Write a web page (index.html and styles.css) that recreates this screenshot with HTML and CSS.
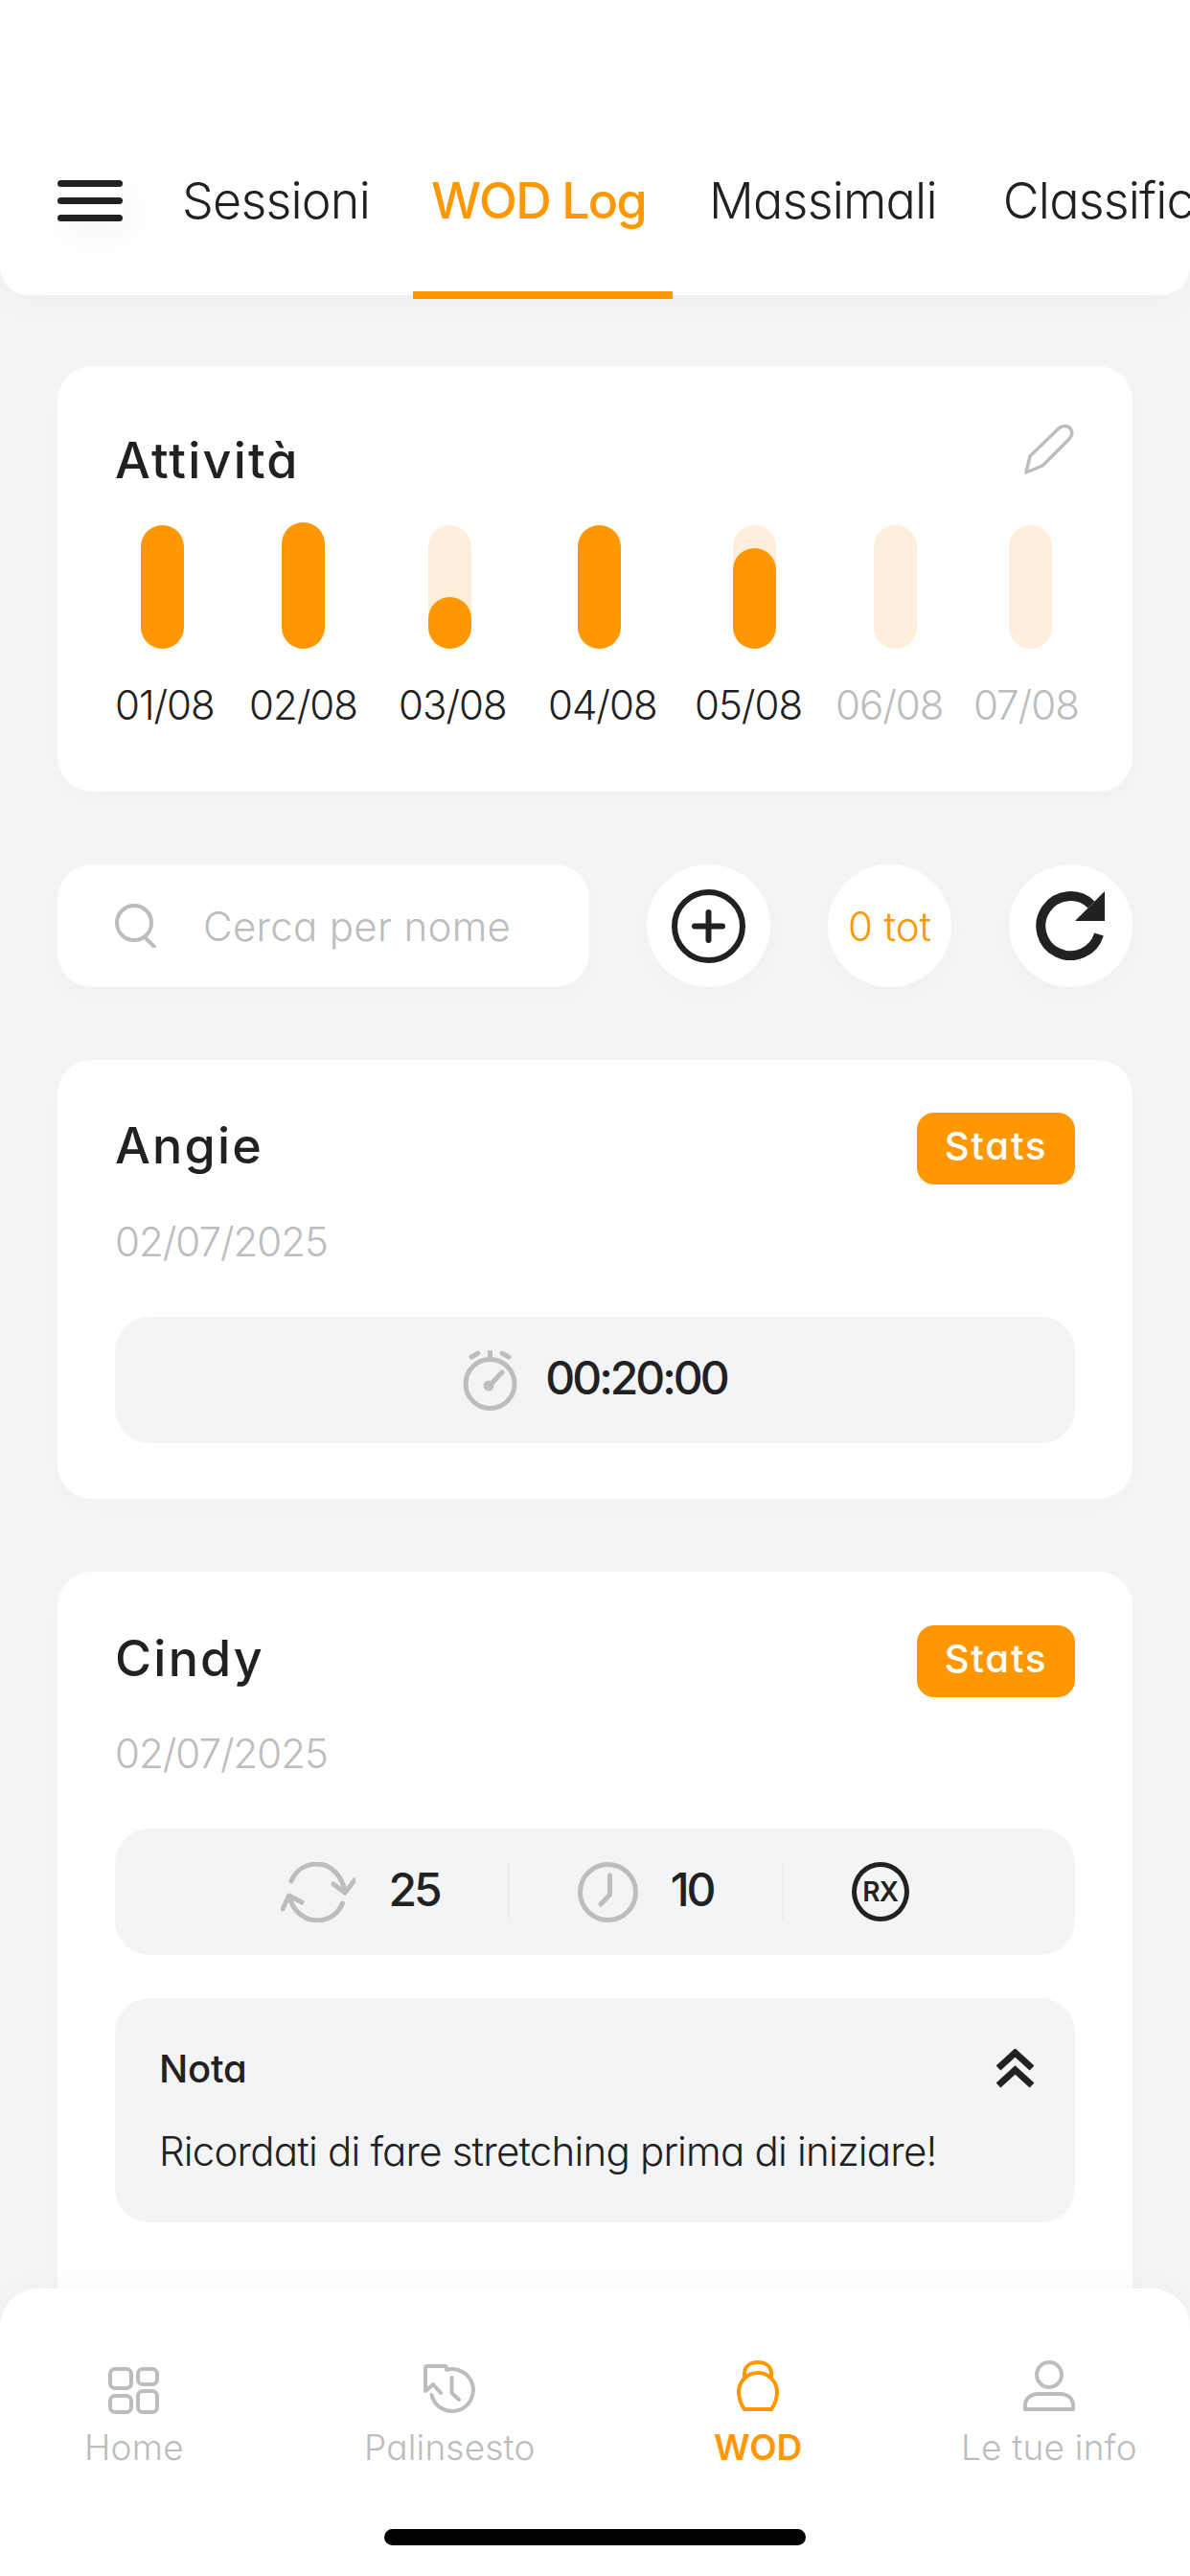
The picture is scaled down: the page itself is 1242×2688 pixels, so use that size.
FILE: index.html
```html
<!DOCTYPE html>
<html lang="it">
<head>
<meta charset="utf-8">
<title>WOD Log</title>
<link rel="stylesheet" href="styles.css">
</head>
<body>
<div class="app">
  <header class="topbar">
    <div class="burger"><span></span><span></span><span></span></div>
    <nav class="tabs">
      <div class="tab">Sessioni</div>
      <div class="tab tab-active">WOD Log</div>
      <div class="tab">Massimali</div>
      <div class="tab">Classifica</div>
    </nav>
  </header>

  <main class="content">
    <section class="card activity">
      <div class="activity-head">
        <h2 class="title">Attività</h2>
        <svg class="pencil" viewBox="0 0 52 52"><path d="M2 50 L6 33 L36 4 Q43 -1 48 4 Q52 9 47 15 L19 43 Z"/></svg>
      </div>
      <div class="bars">
        <div class="track"><div class="fill fill-full"></div></div>
        <div class="track"><div class="fill fill-over"></div></div>
        <div class="track"><div class="fill" style="height:54px"></div></div>
        <div class="track"><div class="fill fill-full"></div></div>
        <div class="track"><div class="fill" style="height:105px"></div></div>
        <div class="track"></div>
        <div class="track"></div>
      </div>
      <div class="days">
        <span>01/08</span><span>02/08</span><span>03/08</span><span>04/08</span><span>05/08</span>
        <span class="day-off">06/08</span><span class="day-off">07/08</span>
      </div>
    </section>

    <section class="tools">
      <div class="search">
        <svg class="search-icon" viewBox="0 0 44 46"><circle cx="21" cy="20" r="18"/><path d="M32 35 L42 45"/></svg>
        <span class="placeholder">Cerca per nome</span>
      </div>
      <div class="round">
        <svg class="plus" viewBox="0 0 77 77"><circle cx="38.5" cy="38.5" r="35.5"/><path d="M24 38.5 H53 M38.5 24 V53"/></svg>
      </div>
      <div class="round total">0 tot</div>
      <div class="round">
        <svg class="redo" viewBox="0 0 73 72"><path class="redo-arc" d="M58 14 A31 31 0 1 0 66 45"/><path class="redo-head" d="M72 0 V31 H41 Z"/></svg>
      </div>
    </section>

    <section class="card wod">
      <div class="wod-head">
        <h2 class="title">Angie</h2>
        <div class="stats">Stats</div>
      </div>
      <div class="date">02/07/2025</div>
      <div class="pill">
        <svg class="stopwatch" viewBox="0 0 57 63"><circle cx="28.5" cy="35" r="25.5"/><path d="M28.5 2 V8 M9 7 L16 3 M48 7 L41 3"/><path d="M27 38 L41 23"/><circle class="pivot" cx="27" cy="37" r="3"/></svg>
        <span class="value">00:20:00</span>
      </div>
    </section>

    <section class="card wod wod-long">
      <div class="wod-head">
        <h2 class="title">Cindy</h2>
        <div class="stats">Stats</div>
      </div>
      <div class="date">02/07/2025</div>
      <div class="pill">
        <div class="cell">
          <svg class="loop" viewBox="0 0 78 63"><path d="M11 20 C16 8 26 2 38 2 C52 2 64 14 67 31 M55 23 L67 32 L77 19 M64.5 43 C60 54 50 61 38 61 C24 61 12 50 9 36 M2 49 L8.5 35 L22 42"/></svg>
          <span class="value">25</span>
        </div>
        <div class="cell cell-mid">
          <svg class="clock" viewBox="0 0 63 63"><circle cx="31.5" cy="31.5" r="29"/><path d="M33.5 14 V34 L24 44"/></svg>
          <span class="value">10</span>
        </div>
        <div class="cell cell-last"><div class="rx">RX</div></div>
      </div>
      <div class="note">
        <div class="note-head">
          <span class="note-title">Nota</span>
          <svg class="chevrons" viewBox="0 0 41 41"><path d="M3 20 L20.5 4 L38 20 M3 38 L20.5 22 L38 38"/></svg>
        </div>
        <p class="note-text">Ricordati di fare stretching prima di iniziare!</p>
      </div>
    </section>
  </main>

  <footer class="bottom">
    <div class="nav">
      <div class="nav-item">
        <svg class="nav-home" viewBox="0 0 53 49"><rect x="2" y="2" width="22" height="20" rx="5"/><rect x="2" y="30" width="22" height="17" rx="5"/><rect x="31" y="2" width="20" height="16" rx="5"/><rect x="31" y="25" width="20" height="22" rx="5"/></svg>
        <span>Home</span>
      </div>
      <div class="nav-item">
        <svg class="nav-pal" viewBox="0 0 55 52"><path d="M24 5 V4 Q24 2 22 2 H4 Q2 2 2 4 V28 L10 21 L18 30"/><path d="M24 5.8 A22 22 0 1 1 8.5 32"/><path d="M29.5 14 V30 L37 37"/></svg>
        <span>Palinsesto</span>
      </div>
      <div class="nav-item nav-active">
        <svg class="nav-wod" viewBox="0 0 44 53"><path d="M8 51 C3 44 2 38 2 33 A20 20 0 0 1 42 33 C42 38 41 44 36 51 Z"/><path d="M8 18 V14 C8 6 14 2 22 2 C30 2 36 6 36 14 V18"/></svg>
        <span>WOD</span>
      </div>
      <div class="nav-item">
        <svg class="nav-user" viewBox="0 0 54 53"><circle cx="27" cy="15" r="13"/><path d="M2 51 V47 C2 38 10 35 16 35 H38 C44 35 52 38 52 47 V51 Z"/></svg>
        <span>Le tue info</span>
      </div>
    </div>
    <div class="home-bar"></div>
  </footer>
</div>
</body>
</html>
```

FILE: styles.css
```css
* { box-sizing: border-box; }
html, body { margin: 0; padding: 0; }
body {
  width: 1242px;
  height: 2688px;
  overflow: hidden;
  background: #f3f4f6;
  color: #212121;
  font-family: Inter, "Liberation Sans", sans-serif;
  font-feature-settings: "cv11" 1;
  font-weight: 300;
}
.app { position: relative; width: 1242px; height: 2688px; overflow: hidden; }

svg { display: block; flex: none; fill: none; stroke: #bdbdbd; stroke-linecap: round; stroke-linejoin: round; }

/* Top bar */
.topbar {
  height: 308px;
  background: #fff;
  border-radius: 0 0 30px 30px;
  box-shadow: 0 10px 40px rgba(0, 0, 0, .025);
  display: flex;
  align-items: flex-start;
  padding: 188px 0 0 60px;
}
.burger {
  width: 68px;
  display: flex;
  flex-direction: column;
  gap: 11px;
  flex: none;
  box-shadow: 8px 14px 30px rgba(0, 0, 0, .03);
}
.burger span { height: 7px; border-radius: 4px; background: #212121; }
.tabs { display: flex; gap: 26px; margin: -48px 0 0 43px; white-space: nowrap; }
.tab {
  height: 172px;
  padding: 37px 19px 0;
  font-size: 52px;
  line-height: 66px;
  letter-spacing: -.8px;
  border-bottom: 8px solid transparent;
}
.tab:last-child { margin-left: 5px; }
.tab-active {
  padding-right: 28px;
  margin-right: -7px;
  color: #ff9800;
  font-weight: 500;
  letter-spacing: -1.7px;
  border-bottom-color: #ff9800;
}

/* Content */
.content { padding: 74px 60px 0; display: flex; flex-direction: column; gap: 76px; }
.card { background: #fff; border-radius: 36px; box-shadow: 0 8px 30px rgba(0, 0, 0, .012); }
.title { margin: 0; font-size: 52px; line-height: 75px; font-weight: 500; letter-spacing: 2.2px; }

.activity { height: 444px; padding: 0 60px; }
.activity-head { height: 163px; padding-top: 61px; position: relative; display: flex; justify-content: space-between; }
.pencil { width: 52px; height: 52px; margin-top: 0; stroke-width: 3.5; transform: translate(-1px, 0); }

.bars {
  display: grid;
  grid-template-columns: 147px 153px 156px 162px 147px 141px 45px;
  height: 132px;
  padding-left: 27px;
  align-items: end;
}
.track { position: relative; width: 45px; height: 129px; border-radius: 23px; background: #feefdc; }
.fill { position: absolute; left: 0; right: 0; bottom: 0; border-radius: 23px; background: #ff9800; }
.fill-full { height: 129px; }
.fill-over { height: 132px; }
.days {
  display: grid;
  grid-template-columns: 140px 156px 156px 153px 147px 144px 110px;
  margin: 32px -10px 0 0;
  font-size: 42px;
  line-height: 54px;
  letter-spacing: -1px;
  white-space: nowrap;
}
.day-off { color: #bdbdbd; }

/* Tools */
.tools { height: 128px; display: flex; gap: 60px; }
.search {
  flex: 1;
  display: flex;
  align-items: center;
  gap: 49px;
  padding-left: 59px;
  background: #fff;
  border-radius: 36px;
  box-shadow: 0 8px 30px rgba(0, 0, 0, .015);
}
.search-icon { width: 44px; height: 46px; stroke-width: 4; }
.placeholder { font-size: 42px; color: #bdbdbd; letter-spacing: .3px; }
.round {
  width: 129px;
  height: 128px;
  flex: none;
  display: flex;
  align-items: center;
  justify-content: center;
  border-radius: 50%;
  background: #fff;
  box-shadow: 0 8px 30px rgba(0, 0, 0, .015);
}
.plus { width: 77px; height: 77px; stroke: #212121; stroke-width: 6; }
.total { color: #ff9800; font-size: 42px; letter-spacing: -.1px; }
.redo { width: 73px; height: 72px; }
.redo-arc { stroke: #212121; stroke-width: 10; stroke-linecap: butt; }
.redo-head { fill: #212121; stroke: none; }

/* WOD cards */
.wod { height: 458px; padding: 55px 60px 0; }
.wod-long { height: 900px; padding-top: 56px; }
.wod-long .date { margin-top: 29px; }
.wod-head { display: flex; justify-content: space-between; align-items: center; height: 75px; }
.wod-head .title { padding-bottom: 6px; }
.stats {
  width: 165px;
  height: 75px;
  border-radius: 18px;
  background: #ff9800;
  color: #fff;
  font-size: 40px;
  font-weight: 500;
  line-height: 70px;
  text-align: center;
  letter-spacing: 1.8px;
}
.date { margin-top: 30px; height: 60px; font-size: 42px; line-height: 60px; color: #bdbdbd; letter-spacing: -1px; }
.pill {
  margin-top: 48px;
  height: 132px;
  display: flex;
  align-items: center;
  justify-content: center;
  border-radius: 36px;
  background: #f3f4f6;
}
.stopwatch { width: 57px; height: 63px; margin-right: 29px; stroke-width: 5; }
.pivot { fill: #bdbdbd; }
.value { padding-bottom: 6px; font-size: 48px; font-weight: 500; letter-spacing: -3px; }
.cell { display: flex; align-items: center; gap: 34px; height: 60px; padding: 0 71px; border-right: 2px solid #eeeef0; }
.cell-last { border-right: 0; }
.loop { width: 78px; height: 63px; stroke-width: 5; }
.clock { width: 63px; height: 63px; stroke-width: 5; }
.rx {
  width: 60px;
  height: 62px;
  border: 5px solid #212121;
  border-radius: 50%;
  display: flex;
  align-items: center;
  justify-content: center;
  font-size: 28px;
  font-weight: 600;
  letter-spacing: -1px;
}
.note { margin-top: 45px; height: 234px; padding: 48px 42px 0 46px; border-radius: 36px; background: #f3f4f6; }
.note-head { display: flex; justify-content: space-between; align-items: center; height: 50px; }
.note-title { font-size: 40px; font-weight: 500; letter-spacing: -.2px; }
.chevrons { width: 41px; height: 41px; stroke: #212121; stroke-width: 7; stroke-linecap: butt; stroke-linejoin: miter; }
.note-text { margin: 32px 0 0; font-size: 42px; line-height: 60px; letter-spacing: -.8px; white-space: nowrap; }

/* Bottom nav */
.bottom {
  position: absolute;
  left: 0;
  right: 0;
  bottom: 0;
  height: 300px;
  background: #fff;
  border-radius: 40px 40px 0 0;
  box-shadow: 0 -6px 30px rgba(0, 0, 0, .02);
}
.nav {
  display: grid;
  grid-template-columns: 292px 365px 258px auto;
  align-items: end;
  height: 188px;
  padding-left: 88px;
}
.nav-item {
  display: flex;
  flex-direction: column;
  align-items: center;
  justify-self: start;
  gap: 13px;
  color: #bdbdbd;
  font-size: 37px;
  line-height: 44px;
  letter-spacing: .2px;
  white-space: nowrap;
}
.nav-active { color: #ff9800; font-weight: 600; letter-spacing: 0; }
.nav-item svg { stroke-width: 4; }
.nav-home { width: 53px; height: 49px; }
.nav-pal { width: 55px; height: 52px; }
.nav-wod { width: 44px; height: 53px; margin-bottom: 3px; stroke: #ff9800; }
.nav-user { width: 54px; height: 53px; margin-bottom: 3px; }
.home-bar { width: 440px; height: 17px; margin: 63px auto 0; border-radius: 9px; background: #000; }
```
